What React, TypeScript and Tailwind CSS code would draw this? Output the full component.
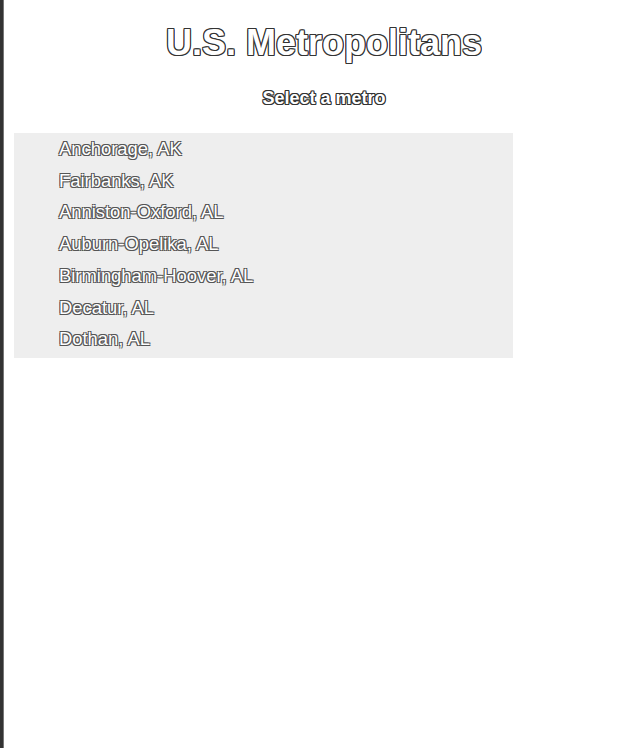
import React from 'react';

const metros = [
    'Anchorage, AK',
    'Fairbanks, AK',
    'Anniston-Oxford, AL',
    'Auburn-Opelika, AL',
    'Birmingham-Hoover, AL',
    'Decatur, AL',
    'Dothan, AL',
];

const outline =
    '[text-shadow:-1px_-1px_0_#333,1px_-1px_0_#333,-1px_1px_0_#333,1px_1px_0_#333,0_1px_0_#333,0_-1px_0_#333,1px_0_0_#333,-1px_0_0_#333]';

const thinOutline =
    '[text-shadow:-1px_-1px_0_#555,1px_-1px_0_#555,-1px_1px_0_#555,1px_1px_0_#555]';

export default function App() {
    return (
        <div className="flex min-h-[748px] w-full bg-white font-['Liberation_Sans',Arial,sans-serif]">
            <div className="w-[4px] shrink-0 bg-[#333] border-r border-[#777]"></div>
            <div className="flex-1 pl-[4px]">
                <h1 className={`mt-[23px] text-center text-[36px] leading-[40px] font-bold text-white ${outline}`}>
                    U.S. Metropolitans
                </h1>
                <h2 className={`mt-[23px] text-center text-[18px] leading-[24px] font-bold text-white ${outline}`}>
                    Select a metro
                </h2>
                <ul className="mt-[23px] ml-[6px] w-[499px] bg-[#eeeeee] pl-[45px] pb-[3px]">
                    {metros.map((m) => (
                        <li
                            key={m}
                            className={`text-[18.4px] leading-[31.7px] text-white ${thinOutline}`}
                        >
                            {m}
                        </li>
                    ))}
                </ul>
            </div>
        </div>
    );
}
